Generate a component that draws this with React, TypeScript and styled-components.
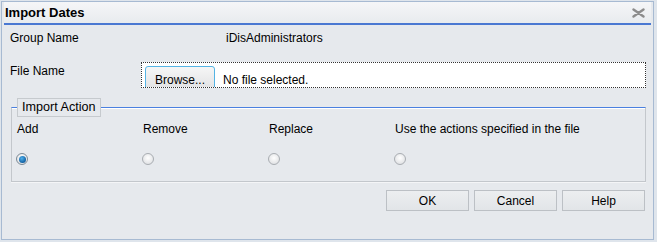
import React from 'react';
import styled, { createGlobalStyle } from 'styled-components';

const GlobalStyle = createGlobalStyle`
  html, body {
    margin: 0;
    padding: 0;
    background: #dfe5ec;
  }
  * {
    box-sizing: border-box;
  }
`;

const Dialog = styled.div`
  margin: 1px 0 0 1px;
  width: 653px;
  height: 239px;
  border: 1px solid #a7bad2;
  padding: 0 2px 2px 2px;
  background: #e6e9ed;
  display: flex;
  flex-direction: column;
  font-family: 'Liberation Sans', Arial, sans-serif;
  font-size: 12px;
  color: #000;
`;

const TitleBar = styled.div`
  height: 23px;
  display: flex;
  align-items: center;
  justify-content: space-between;
  padding: 0 6px 0 1px;
  border-bottom: 2px solid #4a78d2;
  background: linear-gradient(#f5f6f8, #e8ebee);
`;

const Title = styled.span`
  font-weight: bold;
  font-size: 13px;
  color: #000;
`;

const Body = styled.div`
  padding: 4px 5px 0 6px;
  display: flex;
  flex-direction: column;
`;

const Row = styled.div<{ $gap?: number }>`
  display: flex;
  align-items: flex-start;
  margin-top: ${(p) => p.$gap ?? 0}px;
`;

const Label = styled.div<{ $width: number }>`
  width: ${(p) => p.$width}px;
  line-height: 18px;
  flex-shrink: 0;
`;

const Value = styled.div`
  line-height: 18px;
`;

const FileBox = styled.div`
  flex: 1;
  height: 26px;
  border: 1px dotted #333;
  background: #fff;
  overflow: hidden;
  padding: 3px 0 0 3px;
  display: flex;
  align-items: flex-start;
`;

const FileRow = styled.div`
  height: 28px;
  display: flex;
  align-items: center;
`;

const BrowseButton = styled.div`
  width: 70px;
  height: 28px;
  border: 1px solid #55b4e4;
  border-radius: 3px;
  background: linear-gradient(#f6f6f6, #dedfe1);
  display: flex;
  align-items: center;
  justify-content: center;
  font-size: 12px;
  color: #000;
`;

const FileText = styled.span`
  margin-left: 8px;
  color: #000;
`;

const GroupBox = styled.div`
  margin: 19px 0 0 1px;
  padding: 0 5px 16px 5px;
  border: 1px solid #c3c7cc;
  border-top: 1px solid #4a80e0;
  box-shadow: inset 0 1px 0 #ffffff, 0 1px 0 #f4f5f7;
`;

const GroupLegend = styled.div`
  width: fit-content;
  margin: -10px 0 4px 0;
  padding: 0 4px;
  height: 19px;
  line-height: 17px;
  border: 1px solid #c6cace;
  font-size: 12.6px;
  background: #e6e9ed;
`;

const OptionGrid = styled.div`
  display: grid;
  grid-template-columns: repeat(4, 126px);
  row-gap: 16px;
`;

const OptionLabel = styled.div`
  line-height: 16px;
  white-space: nowrap;
`;

const Radio = styled.span<{ $checked?: boolean }>`
  width: 12px;
  height: 12px;
  margin-left: -1px;
  border-radius: 50%;
  border: 1px solid ${(p) => (p.$checked ? '#7c8a96' : '#a9adb2')};
  background: radial-gradient(circle at 50% 40%, #ffffff, #d8dadd);
  display: flex;
  align-items: center;
  justify-content: center;

  &::after {
    content: '';
    display: ${(p) => (p.$checked ? 'block' : 'none')};
    width: 7px;
    height: 7px;
    border-radius: 50%;
    background: radial-gradient(circle at 40% 35%, #4fb0ec, #0d5a9c 75%);
  }
`;

const ButtonBar = styled.div`
  display: flex;
  justify-content: flex-end;
  gap: 5px;
  margin: 8px 1px 0 0;
`;

const DialogButton = styled.div`
  width: 83px;
  height: 21px;
  border: 1px solid #bcc0c5;
  background: linear-gradient(#eceef0, #e2e5e8);
  display: flex;
  align-items: center;
  justify-content: center;
  color: #000;
`;

const CloseIcon = () => (
  <svg width="13" height="10" viewBox="0 0 13 10">
    <path d="M1.5 1.5 L11.5 8.5 M11.5 1.5 L1.5 8.5" stroke="#8c8c8c" strokeWidth="2.4" strokeLinecap="round" />
  </svg>
);

const options = ['Add', 'Remove', 'Replace', 'Use the actions specified in the file'];

export default function App() {
  return (
    <>
      <GlobalStyle />
      <Dialog>
        <TitleBar>
          <Title>Import Dates</Title>
          <CloseIcon />
        </TitleBar>
        <Body>
          <Row $gap={0}>
            <Label $width={216}>Group Name</Label>
            <Value>iDisAdministrators</Value>
          </Row>
          <Row $gap={15}>
            <Label $width={131}>File Name</Label>
            <FileBox>
              <FileRow>
                <BrowseButton>Browse...</BrowseButton>
                <FileText>No file selected.</FileText>
              </FileRow>
            </FileBox>
          </Row>
          <GroupBox>
            <GroupLegend>Import Action</GroupLegend>
            <OptionGrid>
              {options.map((o) => (
                <OptionLabel key={o}>{o}</OptionLabel>
              ))}
              {options.map((o, i) => (
                <Radio key={o} $checked={i === 0} />
              ))}
            </OptionGrid>
          </GroupBox>
          <ButtonBar>
            <DialogButton>OK</DialogButton>
            <DialogButton>Cancel</DialogButton>
            <DialogButton>Help</DialogButton>
          </ButtonBar>
        </Body>
      </Dialog>
    </>
  );
}
